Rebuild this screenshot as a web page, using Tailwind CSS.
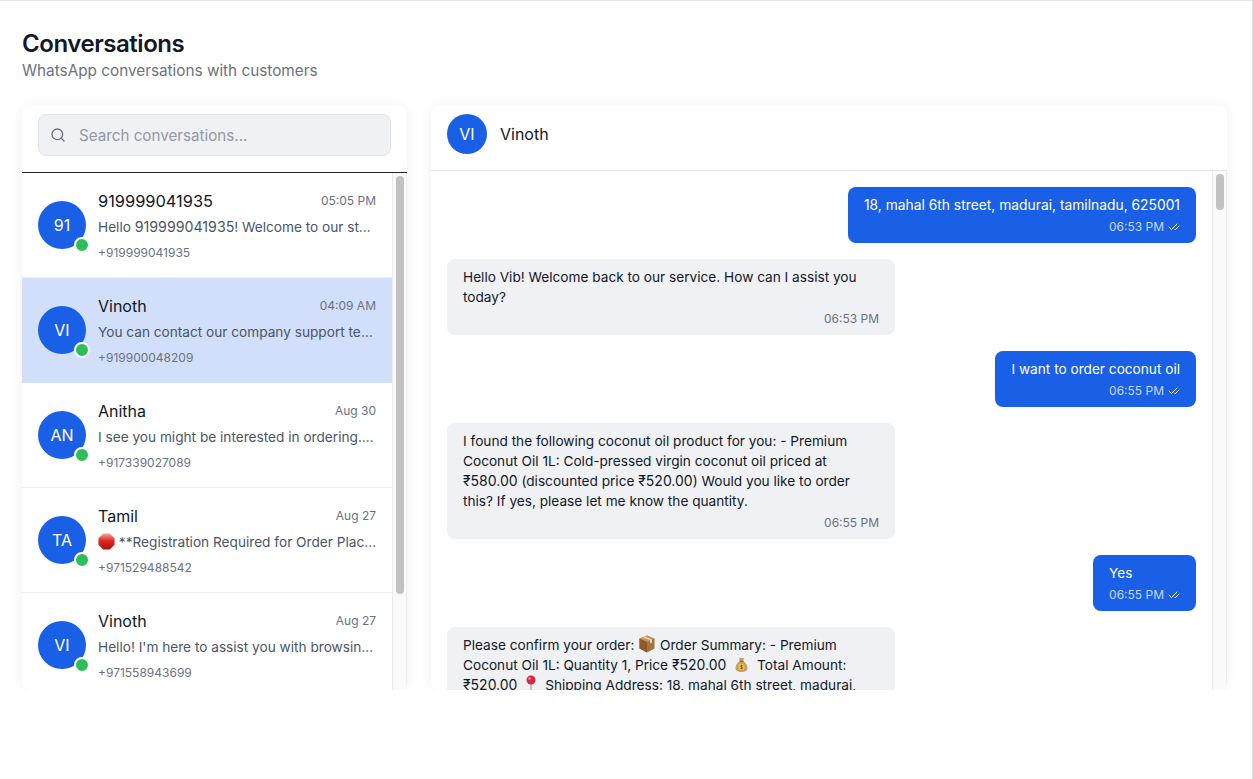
<!DOCTYPE html>
<html lang="en">
<head>
    <meta charset="UTF-8">
    <meta name="viewport" content="width=device-width, initial-scale=1.0">
    <title>Conversations</title>
    <script src="https://cdn.jsdelivr.net/npm/@tailwindcss/browser@4"></script>
</head>
<body class="bg-white font-['Inter',sans-serif] text-gray-900">
    <div class="h-[779px] overflow-hidden border-t border-r border-[#e5e5e5] pt-[27px] pl-[22px] pr-[25px]">
        <h1 class="text-2xl leading-8 font-semibold tracking-[-0.45px] text-[#111827]">Conversations</h1>
        <p class="-mt-px text-[15.3px] leading-6 text-gray-500">WhatsApp conversations with customers</p>

        <!-- wrapper clips the panels at the bottom but leaves room for their soft shadow -->
        <div class="-mx-[22px] mt-[13px] flex h-[594px] gap-6 overflow-hidden px-[22px] pt-[10px]">
            <!-- conversation list -->
            <div class="flex w-[385px] flex-col overflow-hidden rounded-lg bg-white shadow-[0_0_14px_rgba(0,0,0,0.06)]">
                <div class="border-b border-[#1f2937] px-4 pt-2 pb-4">
                    <div class="relative">
                        <svg class="absolute top-[13px] left-[12px] h-4 w-4 text-gray-500" viewBox="0 0 24 24" fill="none" stroke="currentColor" stroke-width="2" stroke-linecap="round" stroke-linejoin="round"><circle cx="11" cy="11" r="8"/><path d="m21 21-4.300-4.300"/></svg>
                        <input type="text" placeholder="Search conversations..." class="h-[42px] w-full rounded-lg border border-[#e1e3e9] bg-[#f0f1f5] pl-10 pr-3 text-[15.2px] outline-none placeholder:text-[#9399a3]">
                    </div>
                </div>
                <div class="flex min-h-0 flex-1">
                    <div class="min-w-0 flex-1 overflow-hidden">
                        <div class="flex gap-3 border-b border-[#f0f0f2] p-4">
                            <div class="relative mt-3 h-12 w-12 shrink-0 self-start rounded-full bg-[#1a60e6]">
                                <div class="flex h-12 items-center justify-center text-base text-white">91</div>
                                <span class="absolute -right-1 -bottom-1 h-4 w-4 rounded-full border-2 border-white bg-[#2dbd5a]"></span>
                            </div>
                            <div class="min-w-0 flex-1">
                                <div class="flex items-center justify-between"><span class="text-[16.4px] leading-6">919999041935</span><span class="text-xs text-gray-500">05:05 PM</span></div>
                                <p class="mt-1 truncate text-[13.65px] leading-5 text-gray-600">Hello <span class="text-[14.2px]">919999041935</span>! Welcome to our store. How can I help?</p>
                                <p class="mt-2 text-xs leading-4 text-gray-500">+919999041935</p>
                            </div>
                        </div>
                        <div class="flex gap-3 border-b border-[#d1dffa] bg-[#d1dffa] p-4">
                            <div class="relative mt-3 h-12 w-12 shrink-0 self-start rounded-full bg-[#1a60e6]">
                                <div class="flex h-12 items-center justify-center text-base text-white">VI</div>
                                <span class="absolute -right-1 -bottom-1 h-4 w-4 rounded-full border-2 border-white bg-[#2dbd5a]"></span>
                            </div>
                            <div class="min-w-0 flex-1">
                                <div class="flex items-center justify-between"><span class="text-base leading-6">Vinoth</span><span class="text-xs text-gray-500">04:09 AM</span></div>
                                <p class="mt-1 truncate text-[13.65px] leading-5 text-gray-600">You can contact our company support team for further help.</p>
                                <p class="mt-2 text-xs leading-4 text-gray-500">+919900048209</p>
                            </div>
                        </div>
                        <div class="flex gap-3 border-b border-[#f0f0f2] p-4">
                            <div class="relative mt-3 h-12 w-12 shrink-0 self-start rounded-full bg-[#1a60e6]">
                                <div class="flex h-12 items-center justify-center text-base text-white">AN</div>
                                <span class="absolute -right-1 -bottom-1 h-4 w-4 rounded-full border-2 border-white bg-[#2dbd5a]"></span>
                            </div>
                            <div class="min-w-0 flex-1">
                                <div class="flex items-center justify-between"><span class="text-base leading-6">Anitha</span><span class="text-xs text-gray-500">Aug 30</span></div>
                                <p class="mt-1 truncate text-[13.65px] leading-5 text-gray-600">I see you might be interested in ordering.... Which product?</p>
                                <p class="mt-2 text-xs leading-4 text-gray-500">+917339027089</p>
                            </div>
                        </div>
                        <div class="flex gap-3 border-b border-[#f0f0f2] p-4">
                            <div class="relative mt-3 h-12 w-12 shrink-0 self-start rounded-full bg-[#1a60e6]">
                                <div class="flex h-12 items-center justify-center text-base text-white">TA</div>
                                <span class="absolute -right-1 -bottom-1 h-4 w-4 rounded-full border-2 border-white bg-[#2dbd5a]"></span>
                            </div>
                            <div class="min-w-0 flex-1">
                                <div class="flex items-center justify-between"><span class="text-base leading-6">Tamil</span><span class="text-xs text-gray-500">Aug 27</span></div>
                                <p class="mt-1 truncate text-[13.65px] leading-5 text-gray-600"><svg class="inline-block h-[17px] w-[17px] align-[-3px]" viewBox="0 0 18 18"><defs><linearGradient id="stop" x1="0" y1="0" x2="0" y2="1"><stop offset="0" stop-color="#f5a79b"/><stop offset="0.45" stop-color="#dd2a1c"/><stop offset="1" stop-color="#b01208"/></linearGradient></defs><path d="M5.600 0.500h6.800l5.100 5.100v6.800l-5.100 5.100H5.600L0.500 12.400V5.600z" fill="url(#stop)"/></svg> **Registration Required for Order Placement and Delivery</p>
                                <p class="mt-2 text-xs leading-4 text-gray-500">+971529488542</p>
                            </div>
                        </div>
                        <div class="flex gap-3 border-b border-[#f0f0f2] p-4">
                            <div class="relative mt-3 h-12 w-12 shrink-0 self-start rounded-full bg-[#1a60e6]">
                                <div class="flex h-12 items-center justify-center text-base text-white">VI</div>
                                <span class="absolute -right-1 -bottom-1 h-4 w-4 rounded-full border-2 border-white bg-[#2dbd5a]"></span>
                            </div>
                            <div class="min-w-0 flex-1">
                                <div class="flex items-center justify-between"><span class="text-base leading-6">Vinoth</span><span class="text-xs text-gray-500">Aug 27</span></div>
                                <p class="mt-1 truncate text-[13.65px] leading-5 text-gray-600">Hello! I'm here to assist you with browsing our products.</p>
                                <p class="mt-2 text-xs leading-4 text-gray-500">+971558943699</p>
                            </div>
                        </div>
                    </div>
                    <div class="w-[15px] shrink-0 border-x border-[#ececec] bg-[#fafafa] pt-[3px] pl-[3px]">
                        <div class="h-[418px] w-2 rounded bg-[#c1c1c1]"></div>
                    </div>
                </div>
            </div>

            <!-- chat -->
            <div class="flex min-w-0 flex-1 flex-col overflow-hidden rounded-lg bg-white shadow-[0_0_14px_rgba(0,0,0,0.06)]">
                <div class="flex items-center gap-[13px] border-b border-[#e4e5eb] px-4 pt-2 pb-4">
                    <div class="flex h-10 w-10 items-center justify-center rounded-full bg-[#1a60e6] text-base text-white">VI</div>
                    <span class="text-base">Vinoth</span>
                </div>
                <div class="flex min-h-0 flex-1">
                    <div class="flex min-w-0 flex-1 flex-col gap-4 overflow-hidden p-4 text-[13.65px] leading-5">
                        <div class="max-w-md self-end rounded-lg bg-[#1a60e6] px-4 py-2 text-white">
                            <p class="text-[13.83px]">18, mahal 6th street, madurai, tamilnadu, 625001</p>
                            <div class="mt-1 flex items-center justify-end gap-1 text-xs leading-4 text-white/75">06:53 PM <svg class="h-3 w-3 text-white/90" viewBox="0 0 24 24" fill="none" stroke="currentColor" stroke-width="2" stroke-linecap="round" stroke-linejoin="round"><path d="M18 6 7 17l-5-5"/><path d="m22 10-7.500 7.500L13 16"/></svg></div>
                        </div>
                        <div class="w-md self-start rounded-lg bg-[#f0f1f5] px-4 py-2">
                            <p>Hello Vib! Welcome back to our service. How can I assist you today?</p>
                            <div class="mt-1 text-right text-xs leading-4 text-gray-500">06:53 PM</div>
                        </div>
                        <div class="max-w-md self-end rounded-lg bg-[#1a60e6] px-4 py-2 text-white">
                            <p>I want to order coconut oil</p>
                            <div class="mt-1 flex items-center justify-end gap-1 text-xs leading-4 text-white/75">06:55 PM <svg class="h-3 w-3 text-white/90" viewBox="0 0 24 24" fill="none" stroke="currentColor" stroke-width="2" stroke-linecap="round" stroke-linejoin="round"><path d="M18 6 7 17l-5-5"/><path d="m22 10-7.500 7.500L13 16"/></svg></div>
                        </div>
                        <div class="w-md self-start rounded-lg bg-[#f0f1f5] px-4 py-2">
                            <p>I found the following coconut oil product for you: - Premium Coconut Oil 1L: Cold-pressed virgin coconut oil priced at <span class="text-sm">₹580.00</span> (discounted price <span class="text-sm">₹520.00</span>) Would you like to order this? If yes, please let me know the quantity.</p>
                            <div class="mt-1 text-right text-xs leading-4 text-gray-500">06:55 PM</div>
                        </div>
                        <div class="max-w-md self-end rounded-lg bg-[#1a60e6] px-4 py-2 text-white">
                            <p>Yes</p>
                            <div class="mt-1 flex items-center justify-end gap-1 text-xs leading-4 text-white/75">06:55 PM <svg class="h-3 w-3 text-white/90" viewBox="0 0 24 24" fill="none" stroke="currentColor" stroke-width="2" stroke-linecap="round" stroke-linejoin="round"><path d="M18 6 7 17l-5-5"/><path d="m22 10-7.500 7.500L13 16"/></svg></div>
                        </div>
                        <div class="w-md shrink-0 self-start rounded-lg bg-[#f0f1f5] px-4 py-2">
                            <p>Please confirm your order: <svg class="inline-block h-[18px] w-[18px] align-[-3px]" viewBox="0 0 18 18"><path d="M9 0.500 16.500 3.500V13.500L9 17.500 1.500 13.500V3.500z" fill="#a8703a"/><path d="M9 0.500 16.500 3.500 9 7 1.500 3.500z" fill="#c99a63"/><path d="M9 7V17.500L1.500 13.500V3.500z" fill="#8c5a2b"/><path d="M4.500 2 12 5.300V8.500L14 7.600V4.400L6.500 1.200z" fill="#e9d3ae"/></svg> Order Summary: - Premium Coconut Oil 1L: Quantity 1, Price <span class="text-sm">₹520.00</span> <svg class="inline-block h-[16px] w-[23px] align-[-3px]" viewBox="0 0 18 16"><path d="M6.500 1h5L10.500 4.200c3 1.300 4.500 4.300 4.500 7 0 2.600-2.500 3.800-6 3.800s-6-1.200-6-3.800c0-2.700 1.500-5.700 4.500-7z" fill="#c9a05a"/><path d="M7 4.200h4" stroke="#7a5a2a" stroke-width="1"/><circle cx="9" cy="10" r="3.200" fill="#e8c34a"/><path d="M10.200 8.800C9.500 8.200 8 8.400 8 9.300c0 1.200 2.200.6 2.200 1.700 0 .9-1.500 1.100-2.300.5M9 7.800v4.400" fill="none" stroke="#6b4a1c" stroke-width=".7"/></svg> Total Amount: <span class="text-sm">₹520.00</span> <svg class="inline-block h-[18px] w-[20px] align-[-3px]" viewBox="0 0 18 18"><path d="M9 8v9.500" stroke="#9aa0a6" stroke-width="1.200"/><circle cx="9" cy="5" r="4.500" fill="#d9263c"/><circle cx="7.500" cy="3.500" r="1.200" fill="#f3a3ad"/></svg> Shipping Address: 18, mahal 6th street, madurai, tamilnadu, 625001 Please reply with yes to confirm the order.</p>
                            <div class="mt-1 text-right text-xs leading-4 text-gray-500">06:55 PM</div>
                        </div>
                    </div>
                    <div class="w-[15px] shrink-0 border-x border-[#ececec] bg-[#fafafa] pt-[3px] pl-[3px]">
                        <div class="h-9 w-2 rounded bg-[#c1c1c1]"></div>
                    </div>
                </div>
            </div>
        </div>
    </div>
</body>
</html>
